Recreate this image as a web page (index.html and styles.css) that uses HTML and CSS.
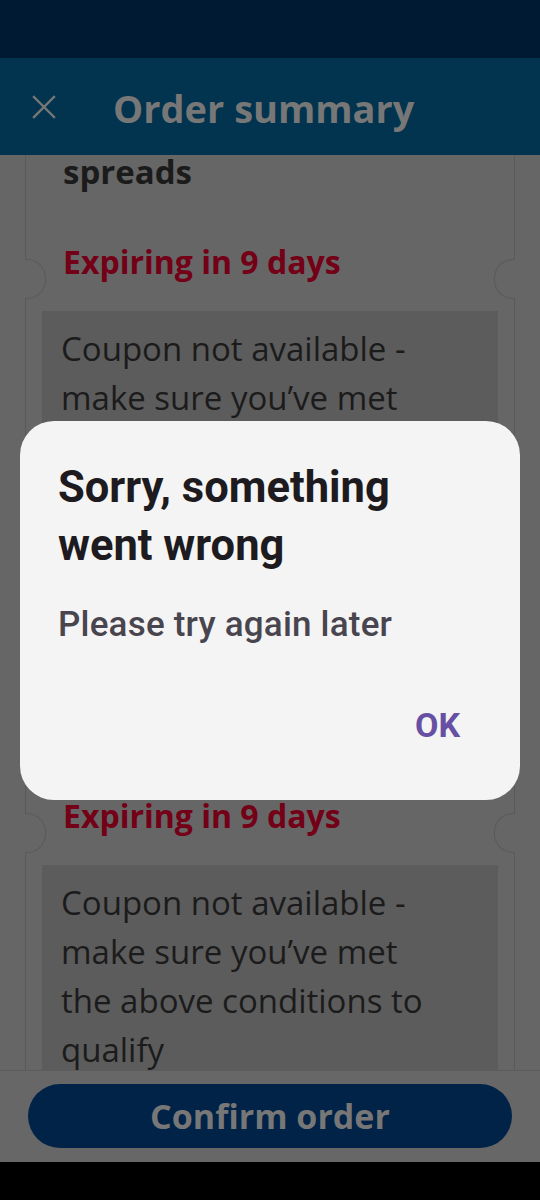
FILE: index.html
```html
<!DOCTYPE html>
<html lang="en">
<head>
<meta charset="utf-8">
<meta name="viewport" content="width=540, initial-scale=1">
<title>Order summary</title>
<link rel="stylesheet" href="styles.css">
</head>
<body>
  <div class="screen">
    <div class="status-bar"></div>

    <header class="app-bar">
      <button class="icon-btn" aria-label="Close">
        <svg width="24" height="24" viewBox="0 0 24 24" aria-hidden="true">
          <path d="M2 2 L22 22 M22 2 L2 22" stroke="currentColor" stroke-width="2.4" stroke-linecap="square" fill="none"/>
        </svg>
      </button>
      <h1 class="app-title">Order summary</h1>
    </header>

    <main class="content">
      <div class="coupon-list">
        <article class="coupon coupon--scrolled">
          <h2 class="coupon-title">spreads</h2>
          <p class="coupon-expiry">Expiring in 9 days</p>
          <div class="coupon-note">Coupon not available - make sure you’ve met the above conditions to qualify</div>
        </article>

        <article class="coupon">
          <div class="coupon-head"></div>
          <p class="coupon-expiry">Expiring in 9 days</p>
          <div class="coupon-note">Coupon not available - make sure you’ve met the above conditions to qualify</div>
        </article>
      </div>
    </main>

    <footer class="footer">
      <button class="primary-btn">Confirm order</button>
    </footer>

    <div class="nav-bar"></div>

    <div class="scrim">
      <div class="dialog" role="alertdialog" aria-labelledby="dlg-title">
        <h2 id="dlg-title" class="dialog-title">Sorry, something went wrong</h2>
        <p class="dialog-body">Please try again later</p>
        <div class="dialog-actions">
          <button class="text-btn">OK</button>
        </div>
      </div>
    </div>
  </div>
</body>
</html>
```

FILE: styles.css
```css
* {
  box-sizing: border-box;
}

html, body {
  margin: 0;
  padding: 0;
  background: #000;
}

.screen {
  position: relative;
  width: 540px;
  height: 1200px;
  display: flex;
  flex-direction: column;
  overflow: hidden;
  font-family: "Open Sans", "Liberation Sans", sans-serif;
  background: #666666;
}

/* system bars */
.status-bar {
  height: 58px;
  flex: none;
  background: #011a33;
}

.nav-bar {
  height: 38px;
  flex: none;
  background: #000;
}

/* top app bar */
.app-bar {
  height: 97px;
  flex: none;
  display: flex;
  align-items: center;
  padding: 3px 0 0 32px;
  background: #02344f;
  color: #767676;
}

.icon-btn {
  width: 24px;
  height: 24px;
  padding: 0;
  border: 0;
  background: none;
  color: #767676;
  display: flex;
  margin-top: -3px;
}

.app-title {
  margin: 0 0 0 57px;
  font-size: 38px;
  font-weight: 700;
  line-height: 52px;
  color: #777777;
}

/* scrolling list of coupons */
.content {
  flex: 1;
  min-height: 0;
  overflow: hidden;
}

.coupon-list {
  display: flex;
  flex-direction: column;
  gap: 16px;
  padding: 0 25px;
}

.coupon {
  border: 1px solid #5a5a5a;
  padding: 33px 16px 20px;
  background: #666666;
}

.coupon--scrolled {
  margin-top: -39px;
}

.coupon-head {
  height: 141px;
}

.coupon-title {
  margin: 0 0 0 21px;
  font-size: 33px;
  line-height: 44px;
  font-weight: 700;
  color: #1b1b1b;
}

.coupon-expiry {
  position: relative;
  margin: 48px 0 0;
  padding-left: 21px;
  font-size: 32px;
  line-height: 40px;
  font-weight: 700;
  color: #730016;
}

/* ticket notches cut into the card edges */
.coupon-expiry::before,
.coupon-expiry::after {
  content: "";
  position: absolute;
  top: 17px;
  width: 20px;
  height: 38px;
  border: 1px solid #5a5a5a;
  background: #666666;
}

.coupon-expiry::before {
  left: -17px;
  border-left: 0;
  border-radius: 0 19px 19px 0;
}

.coupon-expiry::after {
  right: -17px;
  border-right: 0;
  border-radius: 19px 0 0 19px;
}

.coupon-note {
  margin-top: 29px;
  padding: 13px 50px 16px 19px;
  background: #5c5c5c;
  font-size: 33px;
  line-height: 49px;
  color: #1b1b1b;
}

/* bottom action bar */
.footer {
  flex: none;
  border-top: 1px solid #5c5c5c;
  padding: 13px 28px 14px;
  background: #676767;
}

.primary-btn {
  display: block;
  width: 100%;
  height: 64px;
  border: 0;
  border-radius: 32px;
  background: #012348;
  color: #777777;
  font-family: "Open Sans", "Liberation Sans", sans-serif;
  font-size: 34px;
  font-weight: 700;
  line-height: 64px;
  padding: 0;
}

/* modal dialog */
.scrim {
  position: absolute;
  top: 58px;
  left: 0;
  right: 0;
  bottom: 38px;
  display: flex;
  align-items: center;
  justify-content: center;
}

.dialog {
  width: 500px;
  height: 379px;
  border-radius: 34px;
  background: #f4f4f4;
  padding: 38px 60px 0 38px;
  font-family: Roboto, "Noto Sans", sans-serif;
}

.dialog-title {
  margin: 0;
  font-size: 43.5px;
  line-height: 58px;
  font-weight: 700;
  color: #1d1b20;
}

.dialog-body {
  margin: 28px 0 0;
  font-size: 35px;
  line-height: 44px;
  font-weight: 500;
  letter-spacing: 0.2px;
  color: #49454f;
}

.dialog-actions {
  display: flex;
  justify-content: flex-end;
  margin-top: 56px;
}

.text-btn {
  padding: 0;
  border: 0;
  background: none;
  font-family: Roboto, "Noto Sans", sans-serif;
  font-size: 34px;
  line-height: 44px;
  font-weight: 700;
  color: #6750a4;
}
```
